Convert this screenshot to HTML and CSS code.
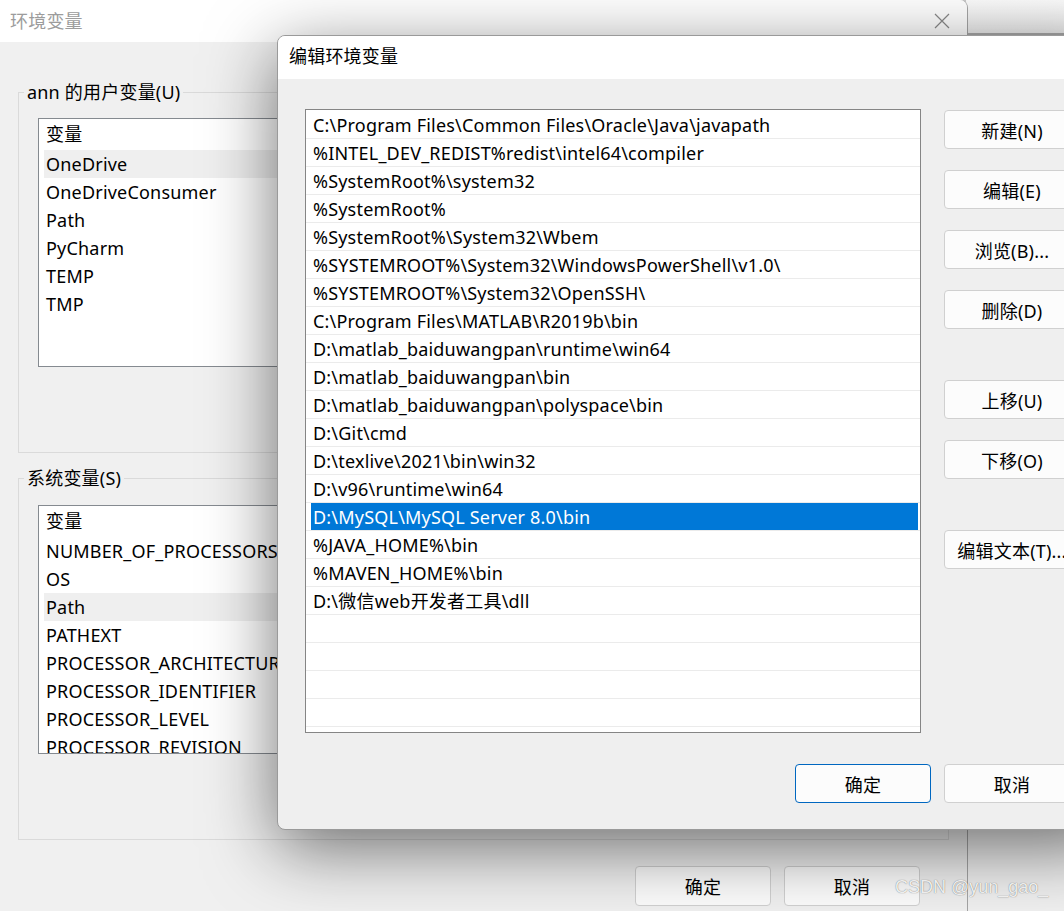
FILE: index.html
```html
<!DOCTYPE html>
<html lang="zh-CN">
<head>
   <meta charset="UTF-8">
   <title>编辑环境变量</title>
   <link rel="stylesheet" href="styles.css">
</head>
<body>
<div class="desktop">

   <!-- окно сзади справа -->
   <div class="win far-win">
      <div class="far-title"></div>
   </div>

   <!-- 环境变量 -->
   <div class="win env-win">
      <div class="titlebar env-title">
         <span class="title">环境变量</span>
         <svg class="close" width="16" height="16" viewBox="0 0 16 16">
            <path d="M1 1 L15 15 M15 1 L1 15" stroke="#8a8a8a" stroke-width="1.2" fill="none"/>
         </svg>
      </div>

      <fieldset class="group user-group">
         <legend>ann 的用户变量(U)</legend>
         <div class="varlist">
            <div class="var-head">变量</div>
            <div class="var-row sel">OneDrive</div>
            <div class="var-row">OneDriveConsumer</div>
            <div class="var-row">Path</div>
            <div class="var-row">PyCharm</div>
            <div class="var-row">TEMP</div>
            <div class="var-row">TMP</div>
         </div>
      </fieldset>

      <fieldset class="group sys-group">
         <legend>系统变量(S)</legend>
         <div class="varlist">
            <div class="var-head">变量</div>
            <div class="var-row">NUMBER_OF_PROCESSORS</div>
            <div class="var-row">OS</div>
            <div class="var-row sel">Path</div>
            <div class="var-row">PATHEXT</div>
            <div class="var-row">PROCESSOR_ARCHITECTURE</div>
            <div class="var-row">PROCESSOR_IDENTIFIER</div>
            <div class="var-row">PROCESSOR_LEVEL</div>
            <div class="var-row">PROCESSOR_REVISION</div>
         </div>
      </fieldset>

      <div class="env-footer">
         <button class="btn">确定</button>
         <button class="btn">取消</button>
      </div>
   </div>

   <!-- 编辑环境变量 -->
   <div class="win edit-win">
      <div class="titlebar edit-title">编辑环境变量</div>

      <div class="edit-body">
         <div class="path-list">
            <div class="path-row"><span>C:\Program Files\Common Files\Oracle\Java\javapath</span></div>
            <div class="path-row"><span>%INTEL_DEV_REDIST%redist\intel64\compiler</span></div>
            <div class="path-row"><span>%SystemRoot%\system32</span></div>
            <div class="path-row"><span>%SystemRoot%</span></div>
            <div class="path-row"><span>%SystemRoot%\System32\Wbem</span></div>
            <div class="path-row"><span>%SYSTEMROOT%\System32\WindowsPowerShell\v1.0\</span></div>
            <div class="path-row"><span>%SYSTEMROOT%\System32\OpenSSH\</span></div>
            <div class="path-row"><span>C:\Program Files\MATLAB\R2019b\bin</span></div>
            <div class="path-row"><span>D:\matlab_baiduwangpan\runtime\win64</span></div>
            <div class="path-row"><span>D:\matlab_baiduwangpan\bin</span></div>
            <div class="path-row"><span>D:\matlab_baiduwangpan\polyspace\bin</span></div>
            <div class="path-row"><span>D:\Git\cmd</span></div>
            <div class="path-row"><span>D:\texlive\2021\bin\win32</span></div>
            <div class="path-row"><span>D:\v96\runtime\win64</span></div>
            <div class="path-row sel"><span>D:\MySQL\MySQL Server 8.0\bin</span></div>
            <div class="path-row"><span>%JAVA_HOME%\bin</span></div>
            <div class="path-row"><span>%MAVEN_HOME%\bin</span></div>
            <div class="path-row"><span>D:\微信web开发者工具\dll</span></div>
            <div class="path-row"><span></span></div>
            <div class="path-row"><span></span></div>
            <div class="path-row"><span></span></div>
            <div class="path-row"><span></span></div>
            <div class="path-row"><span></span></div>
         </div>

         <div class="side-btns">
            <button class="btn">新建(N)</button>
            <button class="btn">编辑(E)</button>
            <button class="btn">浏览(B)...</button>
            <button class="btn">删除(D)</button>
            <button class="btn push">上移(U)</button>
            <button class="btn">下移(O)</button>
            <button class="btn push">编辑文本(T)...</button>
         </div>
      </div>

      <div class="edit-footer">
         <button class="btn default">确定</button>
         <button class="btn">取消</button>
      </div>
   </div>

   <div class="watermark">CSDN @yun_gao_</div>
</div>
</body>
</html>
```

FILE: styles.css
```css
* {
   box-sizing: border-box;
}

body {
   margin: 0;
   font-family: "Noto Sans", "Noto Sans CJK SC", sans-serif;
   font-size: 18px;
   letter-spacing: 0.2px;
   color: #000;
   background: #c9c9c9;
}

.desktop {
   position: relative;
   width: 1064px;
   height: 911px;
   overflow: hidden;
}

.win {
   position: absolute;
   background: #f0f0f0;
}

/* окно за всеми */
.far-win {
   left: 966px;
   top: 0;
   width: 200px;
   height: 911px;
   border-top-left-radius: 8px;
}

.far-title {
   height: 35px;
   background: linear-gradient(#fbfbfb, #ececec);
   border-bottom: 2px solid #a9a9a9;
}

/* 环境变量 */
.env-win {
   left: 0;
   top: 0;
   width: 968px;
   height: 940px;
   border-right: 1px solid #a5a5a5;
   border-top-right-radius: 8px;
   overflow: hidden;
}

.titlebar {
   background: #fff;
}

.env-title {
   height: 42px;
   display: flex;
   align-items: center;
   justify-content: space-between;
   padding: 0 17px 0 10px;
}

.env-title .title {
   color: #9c9c9c;
   line-height: 24px;
}

.group {
   margin: 0 0 0 18px;
   width: 931px;
   padding: 14px 19px 0;
   border: 1px solid #dadada;
}

.group legend {
   margin-left: -14px;
   padding: 0 3px;
   line-height: 24px;
}

.user-group {
   margin-top: 38px;
   height: 373px;
}

.sys-group {
   margin-top: 13px;
   height: 374px;
   padding-top: 15px;
}

.varlist {
   width: 890px;
   height: 249px;
   background: #fff;
   border: 1px solid #858a90;
   overflow: hidden;
}

.var-head {
   height: 31px;
   line-height: 31px;
   padding-left: 7px;
}

.var-row {
   height: 28px;
   line-height: 28px;
   margin-left: 5px;
   padding-left: 2px;
   white-space: nowrap;
}

.var-row.sel {
   background: #efefef;
}

.env-footer {
   display: flex;
   justify-content: flex-end;
   gap: 13px;
   margin-top: 26px;
   padding-right: 47px;
}

.btn {
   width: 136px;
   height: 40px;
   border: 1px solid #d0d0d0;
   border-radius: 4px;
   background: #fcfcfc;
   font: inherit;
   letter-spacing: inherit;
   color: #000;
   padding: 0;
   white-space: nowrap;
}

/* 编辑环境变量 */
.edit-win {
   left: 277px;
   top: 35px;
   width: 840px;
   height: 795px;
   border: 1px solid #9a9a9a;
   border-radius: 8px;
   background: #efefef;
   box-shadow: 0 18px 70px rgba(0, 0, 0, 0.55);
   overflow: hidden;
}

.edit-title {
   height: 43px;
   line-height: 41px;
   padding-left: 11px;
}

.edit-body {
   display: flex;
   gap: 23px;
   padding: 30px 0 0 27px;
}

.path-list {
   width: 616px;
   height: 624px;
   flex-shrink: 0;
   padding-top: 1px;
   background: #fff;
   border: 1px solid #858585;
   overflow: hidden;
}

.path-row {
   height: 28px;
   border-bottom: 1px solid #ebebeb;
   white-space: nowrap;
}

.path-row span {
   display: block;
   height: 27px;
   line-height: 29px;
   margin: 0 2px 0 5px;
   padding-left: 2px;
}

.path-row.sel span {
   background: #0078d7;
   color: #fff;
}

.side-btns {
   display: flex;
   flex-direction: column;
   gap: 21px;
   padding-top: 1px;
}

.side-btns .btn {
   height: 39px;
}

.side-btns .push {
   margin-top: 30px;
}

.edit-footer {
   display: flex;
   gap: 13px;
   margin-top: 31px;
   padding-left: 517px;
}

.edit-footer .btn {
   height: 39px;
}

.btn.default {
   border-color: #0067c0;
}

.watermark {
   position: absolute;
   left: 895px;
   top: 877px;
   font-family: "Liberation Sans", Arial, sans-serif;
   font-size: 18px;
   letter-spacing: 0;
   color: rgba(255, 255, 255, 0.9);
   text-shadow: 0 0 1px rgba(0, 0, 0, 0.6);
}
```
